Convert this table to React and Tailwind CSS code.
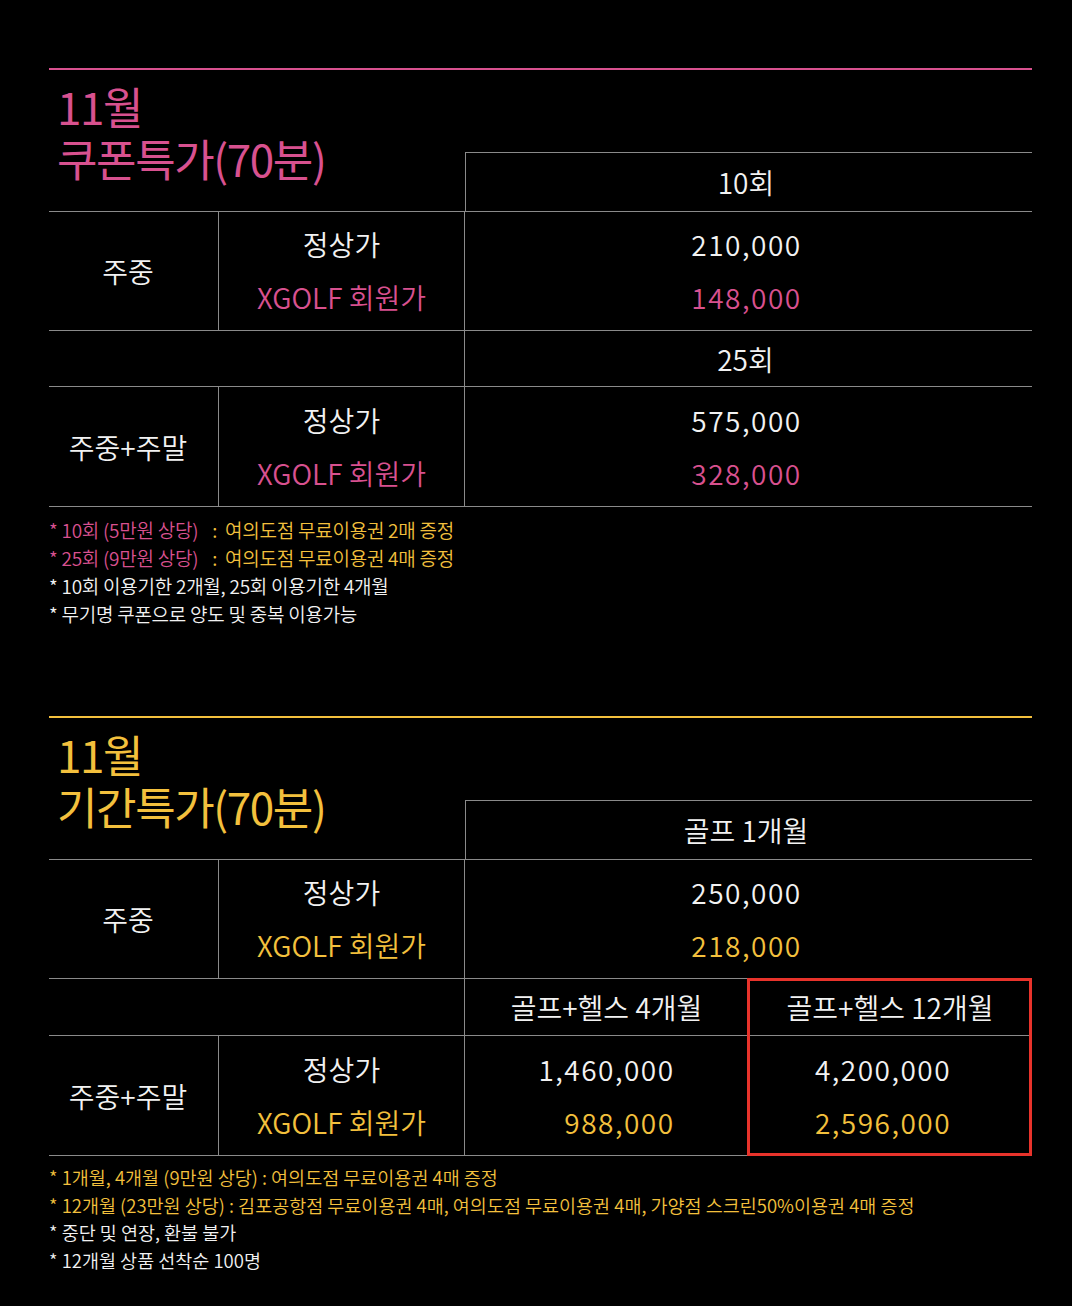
const FONT = { fontFamily: '"Noto Sans CJK KR", "Noto Sans", sans-serif' };

const PINK = 'text-[#d8518f]';
const YELLOW = 'text-[#f3c03d]';
const LINE = 'border-[#8a8a8a]';

function Title({ color, lines }) {
  return (
    <div className={`self-start pt-[10px] pl-[8px] text-[44px] leading-[52px] tracking-[-1.4px] font-normal ${color}`}>
      {lines.map((l) => (
        <div key={l}>{l}</div>
      ))}
    </div>
  );
}

function Labels({ accent }) {
  return (
    <div className={`flex flex-col items-center justify-center border-r ${LINE} text-[28px] leading-[53px]`}>
      <span className="text-[#f2f2f2]">정상가</span>
      <span className={accent}>XGOLF 회원가</span>
    </div>
  );
}

function Prices({ accent, regular, member, pad = '' }) {
  return (
    <div className={`flex items-center justify-center text-[28px] leading-[53px] tracking-[1.5px] ${pad}`}>
      <div className="flex flex-col items-end">
        <span className="text-[#f2f2f2]">{regular}</span>
        <span className={accent}>{member}</span>
      </div>
    </div>
  );
}

function PriceRow({ label, accent, regular, member, h = 'h-[119px]' }) {
  return (
    <div className={`grid grid-cols-[170px_246px_1fr] border-b ${LINE} ${h}`}>
      <div className={`flex items-center justify-center pr-[11px] border-r ${LINE} text-[28px] text-[#f2f2f2]`}>
        {label}
      </div>
      <Labels accent={accent} />
      <Prices accent={accent} regular={regular} member={member} pad="pr-[4px]" />
    </div>
  );
}

function Head({ color, lines, col }) {
  return (
    <div className={`flex justify-between h-[142px] border-b ${LINE}`}>
      <Title color={color} lines={lines} />
      <div className={`self-end w-[567px] h-[59px] pr-[6px] border-t border-l ${LINE} flex items-center justify-center text-[28px] text-[#f2f2f2]`}>
        {col}
      </div>
    </div>
  );
}

function CouponSection() {
  return (
    <section className="border-t-2 border-[#d8518f]">
      <Head color={PINK} lines={['11월', '쿠폰특가(70분)']} col="10회" />
      <PriceRow label="주중" accent={PINK} regular="210,000" member="148,000" />
      <div className={`grid grid-cols-[416px_1fr] h-[56px] border-b ${LINE}`}>
        <div className={`border-r ${LINE}`} />
        <div className="flex items-center justify-center pr-[6px] text-[28px] text-[#f2f2f2]">25회</div>
      </div>
      <PriceRow label="주중+주말" accent={PINK} regular="575,000" member="328,000" h="h-[120px]" />
      <div className="mt-[9px] text-[19px] leading-[28px] tracking-[-0.25px] text-[#f2f2f2]">
        <p>
          <span className={PINK}>* 10회 (5만원 상당)</span>
          <span className={`${YELLOW} ml-[14px]`}>:&nbsp;&nbsp;여의도점 무료이용권 2매 증정</span>
        </p>
        <p>
          <span className={PINK}>* 25회 (9만원 상당)</span>
          <span className={`${YELLOW} ml-[14px]`}>:&nbsp;&nbsp;여의도점 무료이용권 4매 증정</span>
        </p>
        <p>* 10회 이용기한 2개월, 25회 이용기한 4개월</p>
        <p>* 무기명 쿠폰으로 양도 및 중복 이용가능</p>
      </div>
    </section>
  );
}

function PeriodSection() {
  const cell = `flex items-center justify-center border-b ${LINE} text-[28px] text-[#f2f2f2]`;
  return (
    <section className="mt-[88px] border-t-2 border-[#f3c03d]">
      <Head color={YELLOW} lines={['11월', '기간특가(70분)']} col="골프 1개월" />
      <PriceRow label="주중" accent={YELLOW} regular="250,000" member="218,000" />
      <div className="grid grid-cols-[170px_246px_283px_1fr] grid-rows-[57px_120px]">
        <div className={`col-start-1 col-span-2 row-start-1 border-r border-b ${LINE}`} />
        <div className={`col-start-3 row-start-1 ${cell}`}>골프+헬스 4개월</div>
        <div className={`col-start-4 row-start-1 ${cell}`}>골프+헬스 12개월</div>
        <div className={`col-start-1 row-start-2 pr-[11px] border-r ${cell}`}>주중+주말</div>
        <div className={`col-start-2 row-start-2 border-b ${LINE} grid`}>
          <Labels accent={YELLOW} />
        </div>
        <div className={`col-start-3 row-start-2 border-b ${LINE} grid`}>
          <Prices accent={YELLOW} regular="1,460,000" member="988,000" />
        </div>
        <div className={`col-start-4 row-start-2 border-b ${LINE} grid`}>
          <Prices accent={YELLOW} regular="4,200,000" member="2,596,000" pad="pr-[14px]" />
        </div>
        <div className="col-start-4 row-start-1 row-span-2 -mt-px -ml-px border-[3px] border-[#e8332b] pointer-events-none" />
      </div>
      <div className="mt-[8px] text-[18.5px] leading-[27.7px] text-[#f2f2f2]">
        <p className={YELLOW}>* 1개월, 4개월 (9만원 상당) : 여의도점 무료이용권 4매 증정</p>
        <p className={YELLOW}>
          * 12개월 (23만원 상당) : 김포공항점 무료이용권 4매, 여의도점 무료이용권 4매, 가양점 스크린50%이용권 4매 증정
        </p>
        <p>* 중단 및 연장, 환불 불가</p>
        <p>* 12개월 상품 선착순 100명</p>
      </div>
    </section>
  );
}

export default function App() {
  return (
    <div className="min-h-[1306px] w-[1072px] bg-black font-[350]" style={FONT}>
      <div className="ml-[49px] w-[983px] pt-[68px] pb-[30px]">
        <CouponSection />
        <PeriodSection />
      </div>
    </div>
  );
}
